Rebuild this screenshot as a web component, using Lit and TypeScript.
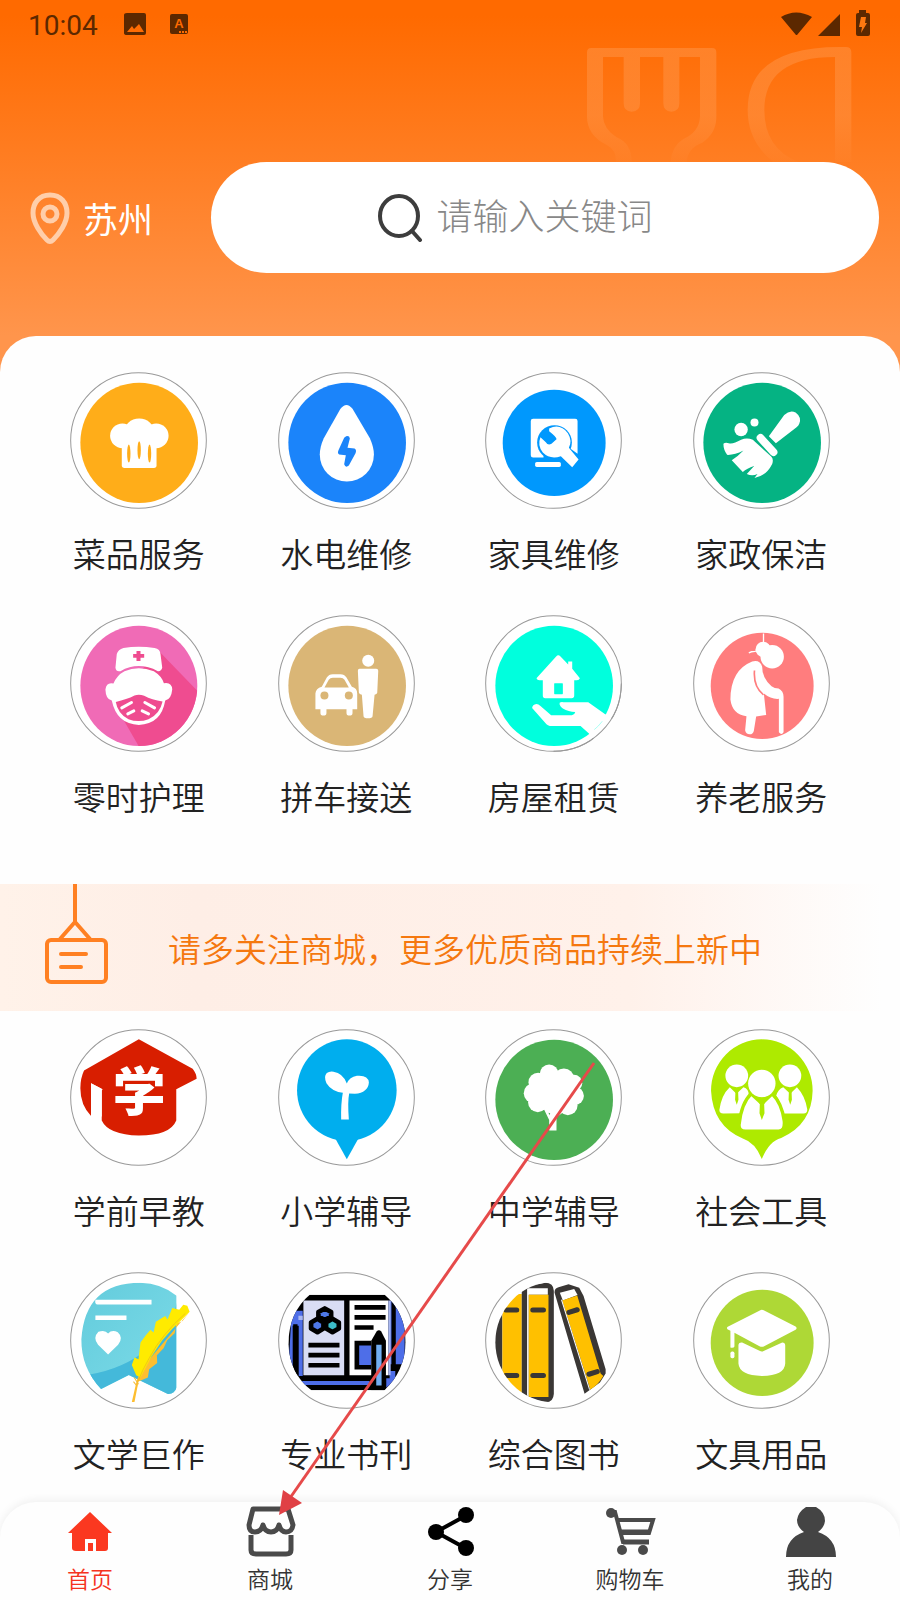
import { LitElement, html, css, svg, SVGTemplateResult } from "lit";
import { customElement, property } from "lit/decorators.js";
import { classMap } from "lit/directives/class-map.js";

interface Service {
  label: string;
  box: string;
  art: SVGTemplateResult;
}

interface Tab {
  label: string;
  art: SVGTemplateResult;
  active?: boolean;
}

const services: Service[] = [
  {
    label: "菜品服务",
    box: "65 37 410 410",
    art: svg`
      <ellipse cx="272" cy="249" rx="176" ry="180" fill="#ffad19"/>
      <g fill="#fff">
        <circle cx="222" cy="228" r="37"/><circle cx="323" cy="228" r="37"/>
        <ellipse cx="272" cy="219" rx="46" ry="43"/>
        <rect x="220" y="230" width="104" height="94" rx="8"/>
      </g>
      <g fill="#ffad19">
        <ellipse cx="241" cy="281" rx="5" ry="27"/><ellipse cx="272" cy="271" rx="5" ry="27"/><ellipse cx="303" cy="281" rx="5" ry="27"/>
      </g>`,
  },
  {
    label: "水电维修",
    box: "686 37 410 410",
    art: svg`
      <ellipse cx="893" cy="249" rx="176" ry="180" fill="#1b84fa"/>
      <path fill="#fff" d="M873 147Q891 124 909 147L961 235Q973 262 973 284A81 81 0 0 1 811 284Q811 262 823 235Z"/>
      <path fill="#1b84fa" d="M890 229Q900 227 901 236L894 264L915 266Q922 270 918 280L898 317Q888 325 884 313L889 286L869 284Q863 280 867 271L884 234Z"/>`,
  },
  {
    label: "家具维修",
    box: "80 37 410 410",
    art: svg`
      <ellipse cx="287" cy="249" rx="154" ry="159" fill="#0098fd"/>
      <path fill="#fff" d="M224 177H350Q357 177 357 184V282L330 262L310 293H224Q217 293 217 286V184Q217 177 224 177Z"/>
      <circle cx="288" cy="248" r="52" fill="#0098fd"/>
      <path stroke="#0098fd" stroke-width="38" d="M310 270L345 305"/>
      <path fill="#0098fd" d="M255 284H320L334 312H255Z"/>
      <path fill="#fff" d="M272 206Q305 190 328 220Q342 243 331 264L360 299L341 322L307 289Q275 300 253 278Q236 256 246 232L262 247Q268 258 279 252L294 238Q295 232 272 214Z"/>
      <rect x="230" y="306" width="77" height="15" rx="5" fill="#fff"/>`,
  },
  {
    label: "家政保洁",
    box: "701 37 410 410",
    art: svg`
      <ellipse cx="908" cy="249" rx="176" ry="180" fill="#05b383"/>
      <g fill="#fff">
        <circle cx="845" cy="209" r="20"/><circle cx="885" cy="188" r="12"/>
        <path d="M928 229L974 166Q990 150 1008 158Q1027 172 1019 192Q1017 198 1010 203L949 250Z"/>
        <path stroke="#fff" stroke-width="23" stroke-linecap="round" d="M903 234L942 277"/>
        <path d="M792 252Q797 247 808 250Q820 254 845 240Q862 232 880 240L935 290Q943 297 938 312Q920 348 885 354L894 342Q878 350 862 342L884 318Q862 325 850 336L817 301Q835 290 852 272Q825 286 803 285Q792 270 792 252Z"/>
      </g>`,
  },
  {
    label: "零时护理",
    box: "65 45 410 410",
    art: svg`
      <clipPath id="nurse"><ellipse cx="271" cy="257" rx="175" ry="180"/></clipPath>
      <g clip-path="url(#nurse)">
        <rect x="90" y="70" width="370" height="370" fill="#f06bb6"/>
        <path fill="#ef4c90" d="M333 155L460 286V440H272L190 298Z"/>
      </g>
      <path fill="#fff" d="M205 162Q209 148 225 144Q270 136 318 144Q335 147 336 163L341 203Q338 214 328 213Q270 183 216 213Q203 216 201 203Z"/>
      <path fill="#ef4c90" d="M264 153H276V162H287V173H276V183H264V173H254V162H264Z"/>
      <path fill="#fff" d="M195 250Q205 225 228 213Q270 195 316 213Q340 228 346 249Q370 245 371 268Q368 298 350 301Q338 372 271 374Q205 372 190 301Q172 298 171 268Q174 245 195 250Z"/>
      <path fill="#ef4c90" d="M202 305Q235 298 258 286Q272 281 287 287Q310 300 342 304Q334 342 300 357Q270 368 240 357Q208 340 202 305Z"/>
      <path stroke="#fff" stroke-width="9" stroke-linecap="round" d="M220 323L249 307M238 341L256 332M289 307L318 323M281 332L300 341"/>`,
  },
  {
    label: "拼车接送",
    box: "686 45 410 410",
    art: svg`
      <ellipse cx="893" cy="257" rx="176" ry="180" fill="#dab676"/>
      <g fill="#fff">
        <circle cx="956" cy="182" r="18"/>
        <path d="M930 206H980Q986 206 986 212L983 278Q982 283 975 284L969 348Q968 354 955 354Q943 354 942 348L937 284Q929 283 928 277L925 212Q925 206 930 206Z"/>
        <path d="M817 260L832 232Q838 222 850 222H873Q885 222 891 232L907 260Q923 264 923 280V327H909V338Q909 346 900 346Q891 346 891 338V327H831V338Q831 346 822 346Q813 346 813 338V327H798V280Q799 265 817 260Z"/>
      </g>
      <path fill="#dab676" d="M825 262L838 239Q842 233 850 233H873Q881 233 885 239L898 262Z"/>
      <circle cx="825" cy="286" r="12" fill="#dab676"/><circle cx="898" cy="286" r="12" fill="#dab676"/>`,
  },
  {
    label: "房屋租赁",
    box: "80 45 410 410",
    art: svg`
      <ellipse cx="287" cy="257" rx="176" ry="180" fill="#00ffdd"/>
      <g fill="#fff">
        <path d="M234 234L293 169Q299 162 306 169L329 193V184H341V206L364 234Q362 240 355 240H347V286Q347 294 339 294H260Q253 294 253 286V240H243Q236 240 234 234Z"/>
        <path d="M221 323Q222 312 234 311Q240 311 246 317L278 345H340Q349 343 350 335Q330 335 313 325Q300 315 304 307Q307 305 315 306H389L445 346L396 404L366 377H274Q268 376 264 372Z"/>
        <path d="M440 343L465 360L410 420L392 400Z"/>
      </g>
      <rect x="287" y="249" width="26" height="33" rx="2" fill="#00ffdd"/>
      <path stroke="#00ffdd" stroke-width="1" fill="none" d="M407 388Q420 378 431 363"/>
      <path stroke="#999" stroke-width="3" fill="none" d="M488 250A203 203 0 0 1 285 453"/>`,
  },
  {
    label: "养老服务",
    box: "701 45 410 410",
    art: svg`
      <ellipse cx="908" cy="257" rx="154" ry="159" fill="#ff7d7e"/>
      <g fill="#fff">
        <circle cx="911" cy="148" r="23"/><circle cx="938" cy="170" r="35"/>
        <path d="M878 184Q902 178 908 200Q908 235 936 258Q945 265 957 265Q972 272 972 290V396Q966 406 958 396V296Q935 298 913 280L920 344L890 349L883 392Q880 402 871 402Q859 402 857 390L861 348Q818 342 813 298Q813 210 878 184Z"/>
      </g>
      <path stroke="#fff" stroke-width="4" fill="none" d="M912 100V130M868 158L876 155Q888 155 892 152"/>
      <path stroke="#ff7d7e" stroke-width="5" fill="none" d="M885 211Q881 260 912 284"/>`,
  },
];

const lessons: Service[] = [
  {
    label: "学前早教",
    box: "65 28 410 410",
    art: svg`
      <path fill="#d81e00" d="M271 59L432 147Q444 162 444 177L383 208V302Q365 347 271 347Q180 345 160 302V207L128 190V288Q96 255 96 205Q96 175 107 152Z"/>
      <path fill="#fff" d="M128 190L163 209L160 212V290H128Z"/>
      <text x="272" y="273" class="glyph">学</text>`,
  },
  {
    label: "小学辅导",
    box: "686 28 410 410",
    art: svg`
      <ellipse cx="892" cy="211" rx="149" ry="152" fill="#00aeee"/>
      <path fill="#00aeee" d="M857 355L892 418L927 355Z"/>
      <path fill="#fff" d="M892 191Q900 172 922 168Q956 165 958 188Q956 218 916 222L899 221Q894 245 898 299H875Q874 250 880 219Q846 214 831 190Q822 170 832 160Q840 154 852 156Q880 160 892 191Z"/>`,
  },
  {
    label: "中学辅导",
    box: "80 28 410 410",
    art: svg`
      <ellipse cx="287" cy="240" rx="176" ry="180" fill="#4caf54"/>
      <g fill="#fff">
        <circle cx="272" cy="162" r="28"/><circle cx="316" cy="177" r="31"/><circle cx="239" cy="188" r="29"/>
        <circle cx="226" cy="220" r="30"/><circle cx="238" cy="248" r="29"/><circle cx="346" cy="190" r="25"/>
        <circle cx="349" cy="228" r="27"/><circle cx="328" cy="257" r="29"/><circle cx="290" cy="220" r="58"/>
        <path d="M255 265L272 300V330Q272 332 276 332H294V292L330 265Z"/>
      </g>
      <path fill="#4caf54" d="M270 279L275 280L273 286Z"/>`,
  },
  {
    label: "社会工具",
    box: "701 28 410 410",
    art: svg`
      <path fill="#aeea00" d="M907 59A152 154 0 0 1 1059 213Q1057 314 965 354Q929 363 907 417Q887 368 850 356Q760 318 755 213A152 154 0 0 1 907 59Z"/>
      <g fill="#fff">
        <circle cx="832" cy="168" r="34"/><circle cx="991" cy="168" r="34"/>
        <path d="M811 202L831 222L852 202Q868 207 868 225Q850 245 846 280L792 281Q779 281 780 270Q786 225 811 202Z"/>
        <path d="M971 202L992 222L1012 202Q1037 228 1043 269Q1043 281 1032 281H972Q965 250 950 228Q955 208 971 202Z"/>
      </g>
      <path fill="#fff" stroke="#aeea00" stroke-width="10" d="M875 222L907 251L938 222Q967 250 974 303Q977 333 957 334H858Q837 333 839 313Q846 250 875 222Z"/>
      <circle cx="907" cy="191" r="41" fill="#fff"/>
      <path fill="#aeea00" d="M819 203Q832 209 845 203L836 215L837 240L832 255L827 240L828 215ZM979 203Q991 209 1004 203L996 215L997 240L992 255L987 240L988 215ZM886 228Q907 240 928 228L914 253L915 280L907 300L900 280L901 253Z"/>`,
  },
  {
    label: "文学巨作",
    box: "65 34 410 410",
    art: svg`
      <defs>
        <linearGradient id="page" x1="0" y1="0" x2="1" y2="1"><stop offset="0" stop-color="#62cbdc"/><stop offset="1" stop-color="#7edce8"/></linearGradient>
        <clipPath id="sheet"><path d="M158 384Q98 320 99 235Q110 66 275 66Q340 68 384 105V380Q378 400 358 399L241 342Z"/></clipPath>
      </defs>
      <g clip-path="url(#sheet)">
        <rect x="90" y="60" width="300" height="345" fill="url(#page)"/>
        <path fill="#44b9da" d="M90 345Q200 335 280 278Q370 230 384 125V410H90Z"/>
      </g>
      <path fill="#fff" d="M141 117H309V131H150Q138 133 141 117ZM141 164H234V178H141ZM179 281L149 252Q132 231 150 213Q170 206 179 218Q190 206 208 214Q226 230 209 252Z"/>
      <path fill="#fdbe30" d="M423 153L402 181L384 188L378 217L356 238L345 262L325 283L326 306L302 325L298 350L270 362L258 423H250L265 358L282 320Z"/>
      <path fill="#ffeb00" d="M416 135L423 153L400 176L370 205L340 240L307 290L276 350L263 343L250 312L258 290L270 295L276 245L292 223L306 207L315 215L322 183L350 166L357 176L371 142L392 147L404 132Z"/>
      <path fill="none" stroke="#e8b520" stroke-width="2" d="M410 158Q340 220 303 290Q280 330 268 362"/>
      <path fill="none" stroke="#f4bb35" stroke-width="3" d="M257 350L270 370M255 362L266 376"/>`,
  },
  {
    label: "专业书刊",
    box: "686 34 410 410",
    art: svg`
      <clipPath id="book"><path d="M781 102H1005Q1068 155 1068 244Q1066 330 1004 388H786Q722 340 717 250Q718 155 781 102Z"/></clipPath>
      <g clip-path="url(#book)">
        <rect x="700" y="90" width="380" height="310" fill="#000"/>
        <path fill="#4e6ee8" d="M727 150H760V345H748V195H730V360H715ZM1038 120L1065 160V310H1022V330H1037V360L1010 380V352H1020V120H1026ZM745 360H960V372H760Z"/>
        <path fill="#d9ddf4" d="M762 119H884V343H762Z"/>
        <path fill="#fff" d="M900 119H1016V343H900Z"/>
        <path fill="#aab8f0" d="M1016 119H1023V343H1016ZM747 165H760V178H747Z"/>
        <path stroke="#000" stroke-width="14" d="M777 253H870M777 283H870M777 313H870M915 140H1008M915 170H1008M915 200H972"/>
        <path fill="#4e6ee8" stroke="#000" stroke-width="14" d="M965 247H922V319H965"/>
        <path fill="#000" d="M965 240L981 212Q988 204 995 212L1009 240V390H965Z"/>
        <path fill="#72aef2" d="M980 252H996V374H980Z"/>
        <path stroke="#000" stroke-width="13" d="M1032 110V312M738 190V355"/>
      </g>
      <g stroke="#000" stroke-width="14" stroke-linejoin="round">
        <path fill="#4e78e8" d="M826 143L845 154V167L826 178L807 167V154Z"/>
        <path fill="#4e78e8" d="M804 174L822 185V203L804 214L785 203V185Z"/>
        <path fill="#3cbcc8" d="M849 174L868 185V203L849 214L830 203V185Z"/>
      </g>`,
  },
  {
    label: "综合图书",
    box: "80 34 410 410",
    art: svg`
      <clipPath id="shelf"><ellipse cx="287" cy="244" rx="176" ry="180"/></clipPath>
      <g clip-path="url(#shelf)">
        <path fill="#3a3735" d="M105 150H132V345H105Z"/>
        <path fill="#ffc000" d="M132 100H190V405H132Z"/>
        <path fill="#3a3735" d="M190 80L260 66Q285 66 286 90V398Q285 423 262 424L190 408Z"/>
        <path fill="#fff" d="M206 83H268V102H206ZM206 102H211V406H206Z"/>
        <path fill="#ffc000" d="M211 102H270V408H211Z"/>
        <path stroke="#3a3735" stroke-width="15" stroke-linecap="round" d="M142 148H175M223 148H255M142 344H175M223 344H255"/>
      </g>
      <path fill="#3a3735" d="M288 95Q288 83 300 80L330 71L362 81L375 106L441 325V338L424 365L378 398L343 282Z"/>
      <path fill="#fff" d="M304 96L347 85L357 103L313 119Z"/>
      <path fill="#ffc000" d="M311 119L356 104L426 338L434 345Q420 370 395 386Z"/>
      <path stroke="#fff" stroke-width="3" d="M309 117L393 386"/>
      <path stroke="#3a3735" stroke-width="15" stroke-linecap="round" d="M331 155L356 147M391 340L416 332"/>`,
  },
  {
    label: "文具用品",
    box: "701 34 410 410",
    art: svg`
      <ellipse cx="908" cy="246" rx="154" ry="159" fill="#aed836"/>
      <g fill="#fff">
        <path d="M805 198L901 149Q907 145 914 149L1008 197Q1014 202 1008 207L914 256Q907 260 900 256L825 216V257Q823 262 813 260V210L804 205Q801 201 805 198Z"/>
        <rect x="813" y="272" width="12" height="20" rx="5"/>
        <path d="M837 252Q838 244 848 245L900 270Q907 274 914 270L968 245Q977 245 977 254V308Q975 345 907 345Q840 344 837 308Z"/>
      </g>`,
  },
];

const tabs: Tab[] = [
  {
    label: "首页",
    active: true,
    art: svg`<path fill="#fb3820" d="M25 5L47 26H43V41Q43 44 40 44H31V32H20V44H11Q7 44 7 41V26H3Z"/><path fill="#fb3820" d="M23 36H28V44H23Z"/>`,
  },
  {
    label: "商城",
    art: svg`<g fill="none" stroke="#4a4a4a" stroke-width="5" stroke-linejoin="round">
      <path d="M8 2H43L48 18Q47 25 41 25Q36 25 34 18Q32 25 26 25Q20 25 18 18Q16 25 10 25Q4 25 4 18Z"/>
      <path d="M6 28V43Q6 47 11 47H41Q46 47 46 43V28"/></g>`,
  },
  {
    label: "分享",
    art: svg`<path fill="none" stroke="#000" stroke-width="4" d="M42 8L11 25L42 42"/><circle cx="11" cy="25" r="8"/><circle cx="41" cy="8" r="8"/><circle cx="41" cy="41" r="8"/>`,
  },
  {
    label: "购物车",
    art: svg`<g fill="none" stroke="#4a4a4a" stroke-width="4">
      <path d="M3 5H10L18 35H44M11 13H48L44 26H16"/></g>
      <path stroke="#4a4a4a" stroke-width="5" d="M16 25H45M18 35H44"/>
      <circle cx="6" cy="6" r="5" fill="#4a4a4a"/><circle cx="17" cy="43" r="5" fill="#4a4a4a"/><circle cx="38" cy="43" r="5" fill="#4a4a4a"/>`,
  },
  {
    label: "我的",
    art: svg`<path fill="#444" d="M21 0H31Q40 5 40 14Q39 21 33 25Q51 31 51 50H1Q1 31 19 25Q12 20 12 13Q13 5 21 0Z"/>`,
  },
];

@customElement("service-grid")
export class ServiceGrid extends LitElement {
  @property({ attribute: false }) items: Service[] = [];

  static styles = css`
    :host {
      display: block;
    }
    .grid {
      display: grid;
      grid-template-columns: repeat(4, 1fr);
      row-gap: 37px;
      padding: 0 35px;
    }
    .item {
      display: flex;
      flex-direction: column;
      align-items: center;
      gap: 19px;
      color: #222;
      text-decoration: none;
    }
    .icon {
      width: 137px;
      height: 137px;
    }
    .label {
      font-size: 33px;
      line-height: 50px;
      font-weight: 350;
      white-space: nowrap;
    }
    .ring {
      fill: #fff;
      stroke: #999;
      stroke-width: 3px;
    }
    .glyph {
      font-size: 158px;
      font-weight: 900;
      text-anchor: middle;
      fill: #fff;
    }
  `;

  render() {
    return html`<div class="grid">
      ${this.items.map((item) => {
        const [x, y, w, h] = item.box.split(" ").map(Number);
        return html`<a class="item" href="#">
          <svg class="icon" viewBox=${item.box} aria-hidden="true">
            <circle class="ring" cx=${x + w / 2} cy=${y + h / 2} r="203"></circle>
            ${item.art}
          </svg>
          <span class="label">${item.label}</span>
        </a>`;
      })}
    </div>`;
  }
}

@customElement("app-root")
export class AppRoot extends LitElement {
  static styles = css`
    :host {
      display: block;
      font-family: "Noto Sans CJK SC", "Noto Sans", sans-serif;
    }
    * {
      box-sizing: border-box;
    }
    .page {
      position: relative;
      display: flex;
      flex-direction: column;
      min-height: 100vh;
      background: #fefefe;
      overflow: hidden;
    }
    .header {
      position: relative;
      background: linear-gradient(#ff6a00 16px, #ff954c 336px);
      padding-bottom: 99px;
    }
    .cutlery {
      position: absolute;
      top: 0;
      right: 0;
      width: 450px;
      height: 162px;
    }
    .status {
      position: relative;
      display: flex;
      align-items: center;
      height: 48px;
      padding: 0 30px 0 28px;
      color: #5c2800;
    }
    .time {
      font: 400 28px/32px Roboto, sans-serif;
      margin-right: 25px;
      padding-top: 3px;
    }
    .status svg {
      height: 28px;
      fill: currentColor;
    }
    .picture {
      width: 24px;
      margin-right: 22px;
    }
    .caption {
      width: 20px;
    }
    .letter {
      font: 700 13px "Liberation Sans", sans-serif;
      fill: #ff6a00;
      text-anchor: middle;
    }
    .radio {
      width: 90px;
      margin-left: auto;
    }
    .finder {
      position: relative;
      display: flex;
      align-items: center;
      gap: 58px;
      margin-top: 114px;
      padding: 0 21px 0 30px;
    }
    .city {
      display: flex;
      align-items: center;
      gap: 13px;
      padding: 0;
      border: 0;
      background: none;
      color: #fff;
      font: inherit;
      font-size: 35px;
      line-height: 50px;
    }
    .pin {
      width: 40px;
      height: 52px;
    }
    .search {
      flex: 1;
      display: flex;
      align-items: center;
      justify-content: center;
      gap: 14px;
      height: 111px;
      border-radius: 56px;
      background: #fff;
    }
    .lens {
      width: 45px;
      height: 48px;
    }
    .query {
      width: 276px;
      height: 60px;
      padding: 0 0 8px;
      border: 0;
      outline: 0;
      background: none;
      font: inherit;
      font-size: 36px;
      font-weight: 300;
      color: #333;
    }
    .query::placeholder {
      color: #888;
      opacity: 1;
    }
    .sheet {
      position: relative;
      margin-top: -36px;
      padding-top: 36px;
      border-radius: 36px 36px 0 0;
      background: #fefefe;
    }
    .notice {
      display: flex;
      align-items: center;
      height: 127px;
      margin: 63px 0 18px;
      padding-left: 44px;
      background: linear-gradient(90deg, #fff2e9, #feeee6 22%, #fff1ea 70%, #fefefe 98%);
      color: #f5780f;
      font-size: 33px;
      line-height: 50px;
      font-weight: 350;
      white-space: nowrap;
    }
    .board {
      width: 64px;
      height: 127px;
      margin-right: 60px;
    }
    .tabs {
      display: grid;
      grid-template-columns: repeat(5, 1fr);
      margin-top: auto;
      height: 98px;
      padding-top: 5px;
      border-radius: 36px 36px 0 0;
      background: #fefefe;
      box-shadow: 0 -2px 8px rgba(0, 0, 0, 0.06);
    }
    .tab {
      display: flex;
      flex-direction: column;
      align-items: center;
      gap: 4px;
      color: #333;
      font-size: 23px;
      line-height: 34px;
      font-weight: 350;
      text-decoration: none;
    }
    .tab.active {
      color: #f53320;
    }
    .tab svg {
      width: 50px;
      height: 50px;
      overflow: visible;
    }
    .pointer {
      position: absolute;
      left: calc(50% - 180px);
      top: 1055px;
      width: 330px;
      height: 470px;
      pointer-events: none;
    }
  `;

  render() {
    return html`<div class="page">
      <header class="header">
        <svg class="cutlery" viewBox="0 0 1350 486" aria-hidden="true">
          <defs>
            <linearGradient id="fade" gradientUnits="userSpaceOnUse" x1="0" y1="140" x2="0" y2="486">
              <stop offset="0" stop-color="#ffad70" stop-opacity=".32" />
              <stop offset=".6" stop-color="#ffad70" stop-opacity=".26" />
              <stop offset="1" stop-color="#ffad70" stop-opacity=".04" />
            </linearGradient>
          </defs>
          <path fill="url(#fade)" d="M424 144H786Q799 144 799 157V355Q797 402 757 428Q712 445 710 486H662Q665 438 700 417Q748 395 750 350V171H688V310Q688 335 664 335Q640 335 640 310V171H570V310Q570 335 545 335Q521 335 521 310V171H459V350Q460 385 500 412Q545 430 545 486H498Q500 450 470 435Q411 405 411 350V157Q411 144 424 144Z" />
          <path fill="url(#fade)" d="M1155 171V486H1204V157Q1204 141 1187 141Q893 135 893 330Q893 425 970 486H1045Q943 445 943 330Q943 171 1155 171Z" />
        </svg>
        <div class="status">
          <span class="time">10:04</span>
          <svg class="picture" viewBox="0 0 24 28" aria-hidden="true">
            <path fill-rule="evenodd" d="M4 3H21Q23 3 23 5V23Q23 25 21 25H4Q1 25 1 23V5Q1 3 4 3ZM4 22H21L16 14L11 19L9 16Z" />
          </svg>
          <svg class="caption" viewBox="0 0 20 28" aria-hidden="true">
            <rect x="1" y="4" width="18" height="20" rx="2" />
            <text class="letter" x="10" y="18">A</text>
            <path stroke="#ff6a00" stroke-width="2" stroke-dasharray="2 1" d="M10 22H18" />
          </svg>
          <svg class="radio" viewBox="0 0 90 28" aria-hidden="true">
            <path d="M1 7Q16-2 32 7L17 25H16ZM38 26L60 4V26ZM79 0H86V3H88Q90 3 90 5V24Q90 26 88 26H78Q76 26 76 24V5Q76 3 78 3H79Z" />
            <path fill="#ff7810" d="M81 7H86L85 13H87L81 23L82 17H79Z" />
          </svg>
        </div>
        <div class="finder">
          <button class="city" type="button">
            <svg class="pin" viewBox="0 0 40 52" fill="none" stroke="#ffceaa" stroke-width="5" aria-hidden="true">
              <path d="M20 3C9 3 3 11 3 21C3 31 11 42 17 48Q20 51 23 48C29 42 37 31 37 21C37 11 31 3 20 3Z" />
              <circle cx="20" cy="22" r="7" />
            </svg>
            <span>苏州</span>
          </button>
          <form class="search" role="search">
            <svg class="lens" viewBox="0 0 45 48" fill="none" stroke="#3d3d3d" stroke-width="4" stroke-linecap="round" aria-hidden="true">
              <ellipse cx="21" cy="22" rx="19" ry="20" />
              <path d="M34 37L42 46" />
            </svg>
            <input class="query" type="text" aria-label="搜索" placeholder="请输入关键词" />
          </form>
        </div>
      </header>
      <main class="sheet">
        <service-grid .items=${services}></service-grid>
        <div class="notice">
          <svg class="board" viewBox="0 0 64 127" fill="none" stroke="#ff8022" stroke-width="4" aria-hidden="true">
            <path d="M31 0V38M16 55L31 38L46 55" />
            <rect x="3" y="56" width="59" height="42" rx="4" />
            <path stroke-linecap="round" d="M17 70H42M17 83H37" />
          </svg>
          <span>请多关注商城，更多优质商品持续上新中</span>
        </div>
        <service-grid .items=${lessons}></service-grid>
      </main>
      <nav class="tabs">
        ${tabs.map(
          (tab) => html`<a class=${classMap({ tab: true, active: !!tab.active })} href="#">
            <svg viewBox="0 0 50 50" aria-hidden="true">${tab.art}</svg>
            <span>${tab.label}</span>
          </a>`
        )}
      </nav>
      <svg class="pointer" viewBox="270 1055 330 470" aria-hidden="true">
        <path stroke="#e64a4a" stroke-width="3" d="M594 1063L290 1498" />
        <path fill="#e04045" d="M279 1515L283 1490L302 1503Z" />
      </svg>
    </div>`;
  }
}
